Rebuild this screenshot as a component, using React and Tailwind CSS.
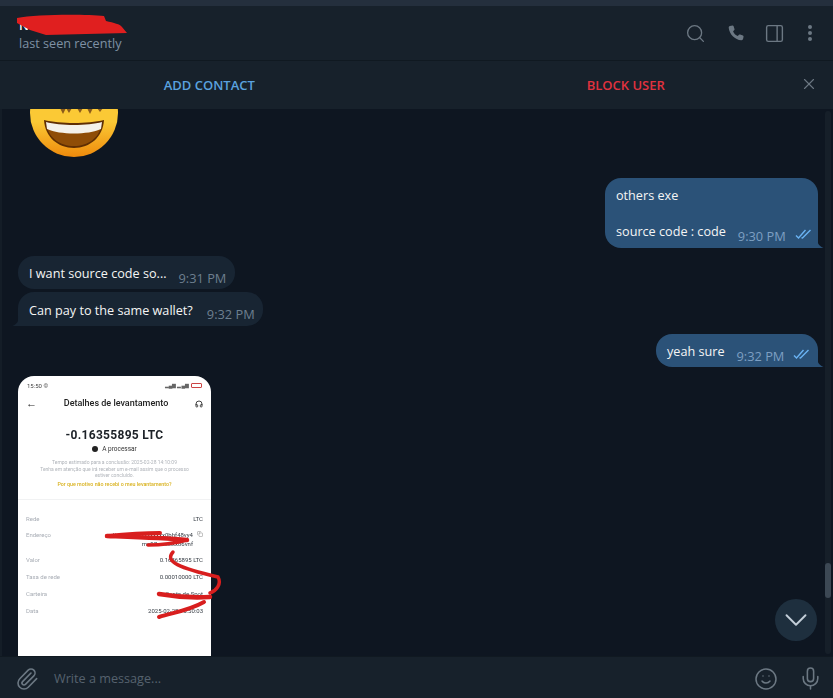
import React from "react";
import { Search, PanelRight, X, ChevronDown, Paperclip, Smile, Mic, Headphones, Copy } from "lucide-react";

function Checks() {
  return (
    <svg width="18" height="10" viewBox="0 0 18 10" fill="none" stroke="#6ab3f3" strokeWidth="1.4" className="ml-[9px] mt-[7px] shrink-0">
      <path d="M1 6.5 L3.5 9 L10.5 1" />
      <path d="M6.5 8.8 L7.5 9 L15.5 1" />
    </svg>
  );
}

function OutTail() {
  return (
    <svg width="7" height="10" viewBox="0 0 7 10" className="absolute -right-[6px] bottom-0" fill="#2b5278">
      <path d="M0 0 C0 5 2 8 6.5 10 L0 10 Z" />
    </svg>
  );
}

function InTail() {
  return (
    <svg width="7" height="10" viewBox="0 0 7 10" className="absolute -left-[6px] bottom-0" fill="#182533">
      <path d="M7 0 C7 5 5 8 0.5 10 L7 10 Z" />
    </svg>
  );
}

function Emoji() {
  return (
    <svg width="88" height="88" viewBox="0 0 88 88" className="-mt-[40px] ml-[28px] shrink-0">
      <defs>
        <linearGradient id="face" x1="0" y1="0" x2="0" y2="1">
          <stop offset="0.6" stopColor="#fbc935" />
          <stop offset="1" stopColor="#ee8a0c" />
        </linearGradient>
      </defs>
      <circle cx="44" cy="44" r="44" fill="url(#face)" />
      <path d="M30 39 L33 45 L36 39 Z M36 39 L39 44 L42 39 Z M47 39 L50 44 L53 39 Z M57 39 L60 45 L63 39 Z M67 39 L70 43 L73 39 Z" fill="#8a5a1a" />
      <path d="M14 51 C30 55 58 55 74 51 C73 68 60 79 44 79 C28 79 15 68 14 51 Z" fill="#5f2e03" />
      <path d="M17 57 C30 63 58 63 71 57 C69 69 58 77 44 77 C30 77 19 69 17 57 Z" fill="#8f4d07" />
      <path d="M16 53 C30 57 58 57 72 53 L71 60 C58 66 30 66 17 60 Z" fill="#f4f1ea" />
    </svg>
  );
}

function Row({ label, value }) {
  return (
    <div className="flex justify-between items-center h-[17px] text-[6px]">
      <span className="text-[#a8adb5]">{label}</span>
      <span className="text-[#3a4048]">{value}</span>
    </div>
  );
}

function PhoneShot() {
  return (
    <div className="relative w-[193px] h-[280px] ml-[16px] mt-[9px] shrink-0 bg-white rounded-t-[16px] leading-[1.5] font-['Roboto',sans-serif]">
      <div className="blur-[0.35px]">
        <div className="flex justify-between items-center px-[9px] pt-[5px] text-[6px] text-[#444]">
          <span>15:50 ©</span>
          <span className="flex items-center gap-[2px] text-[5px] text-[#666]">
            ▂▄▆ ▂▄▆
            <span className="w-[11px] h-[5px] border border-[#c44] rounded-[1px]" />
          </span>
        </div>
        <div className="flex justify-between items-center px-[8px] mt-[7px] text-[#222]">
          <span className="text-[11px] leading-none font-bold">←</span>
          <span className="text-[9px] font-medium">Detalhes de levantamento</span>
          <Headphones size={8} strokeWidth={2.5} />
        </div>
        <div className="mt-[16px] text-center text-[12px] font-bold tracking-[0.3px] text-[#1c2127] leading-[16px]">-0.16355895 LTC</div>
        <div className="flex justify-center items-center gap-[4px] mt-[2px] text-[6.5px] text-[#333]">
          <span className="w-[6px] h-[6px] rounded-full bg-[#222]" />
          A processar
        </div>
        <div className="mt-[5px] text-center text-[5px] leading-[6.5px] text-[#b0b4ba] px-[8px]">
          Tempo estimado para a conclusão: 2025-02-28 14:10:09
          <br />
          Tenha em atenção que irá receber um e-mail assim que o processo
          <br />
          estiver concluído.
        </div>
        <div className="mt-[1px] text-center text-[5.3px] leading-[8px] font-medium text-[#d9b21f]">Por que motivo não recebi o meu levantamento?</div>
        <div className="mt-[11px] border-t border-[#f1f2f3] pt-[10px] px-[8px]">
          <Row label="Rede" value="LTC" />
          <div className="relative flex justify-between h-[24px] text-[6px] pt-[3px]">
            <span className="text-[#a8adb5]">Endereço</span>
            <span className="text-right text-[#3a4048] leading-[9px] pr-[10px]">
              ltc1qxxxxxxxxxxxxx0bhf48vy4
              <br />
              ma97xxxxxxx86vnf
            </span>
            <Copy size={6} className="absolute right-0 top-[4px] text-[#888]" />
          </div>
          <Row label="Valor" value="0.16365895 LTC" />
          <Row label="Taxa de rede" value="0.00010000 LTC" />
          <Row label="Carteira" value="Conta de Spot" />
          <Row label="Data" value="2025-02-28 15:50:03" />
        </div>
      </div>
      <svg width="210" height="130" viewBox="0 0 210 130" fill="none" stroke="#d81e1e" strokeLinecap="round" className="absolute left-0 top-[140px] pointer-events-none">
        <path d="M89 20 C110 18 130 17 142 17" strokeWidth="4" />
        <path d="M89 20 C115 21 145 22 169 24" strokeWidth="4.5" />
        <path d="M130 29 C145 29 158 27 169 24" strokeWidth="3.5" />
        <path d="M155 36 C146 46 162 52 200 61 C204 68 198 75 192 77" strokeWidth="3.5" />
        <path d="M141 78 C158 81 175 82 192 81" strokeWidth="4.5" />
        <path d="M186 86 C172 94 158 96 141 101" strokeWidth="4" />
      </svg>
    </div>
  );
}

export default function App() {
  return (
    <div className="w-[833px] h-[698px] flex flex-col overflow-hidden bg-[#0e1621] font-['Open_Sans',sans-serif]">
      <div className="h-[6px] shrink-0 bg-[#242f3d]" />

      <header className="relative h-[55px] shrink-0 bg-[#17212b] border-b border-[#101921] flex items-center justify-between pl-[19px] pr-[20px]">
        <div className="pt-[2px]">
          <div className="text-[12.65px] leading-[18px] font-semibold text-white">N</div>
          <div className="text-[12.65px] leading-[18px] text-[#7f91a4]">last seen recently</div>
        </div>
        <svg width="112" height="24" viewBox="0 0 112 24" className="absolute left-[16px] top-[7px]" fill="#e01f1f">
          <path d="M1 5 C20 1 70 1 88 3 L90 8 C98 10 104 11 106 14 L111 20 L30 22 L14 17 L1 10 Z" />
        </svg>
        <div className="flex items-center text-[#6c7883]">
          <Search size={21} strokeWidth={1.5} className="mr-[22px]" />
          <svg width="16" height="16" viewBox="0 0 18 18" fill="currentColor" className="mr-[20px]">
            <path d="M2.2 1.2 L5 0.5 C5.6 0.4 6 0.7 6.2 1.2 L7.3 4.4 C7.5 5 7.3 5.4 6.9 5.8 L5.7 7 C6.5 9.4 8.6 11.5 11 12.3 L12.3 11.1 C12.7 10.7 13.2 10.5 13.7 10.7 L16.8 11.9 C17.3 12.1 17.6 12.5 17.5 13.1 L17 15.6 C16.8 16.6 16.1 17.3 15 17.2 C7.8 16.6 1.4 10.2 0.8 3 C0.8 2.1 1.3 1.4 2.2 1.2 Z" />
          </svg>
          <PanelRight size={21} strokeWidth={1.6} className="mr-[22px]" />
          <div className="flex flex-col gap-[2px] px-[1px]">
            <span className="w-[4px] h-[4px] rounded-full bg-[#6c7883]" />
            <span className="w-[4px] h-[4px] rounded-full bg-[#6c7883]" />
            <span className="w-[4px] h-[4px] rounded-full bg-[#6c7883]" />
          </div>
        </div>
      </header>

      <div className="relative h-[48px] shrink-0 bg-[#17212b] flex items-center pt-[1px] text-[13px] font-semibold">
        <div className="w-[419px] text-center text-[#5aa2df]">ADD CONTACT</div>
        <div className="w-[415px] text-center text-[#e0323f]">BLOCK USER</div>
        <X size={18} strokeWidth={1.5} className="absolute left-[800px] top-[14px] text-[#6c7883]" />
      </div>

      <main className="relative flex-1 min-h-0 overflow-hidden flex flex-col border-l-[2px] border-[#141d27] text-[12.65px] leading-[18px] text-[#f5f5f5]">
        <Emoji />

        <div className="relative self-end mt-[21px] mr-[15px] w-[213px] h-[70px] bg-[#2b5278] rounded-t-[16px] rounded-bl-[16px] pl-[11px] pt-[8px] whitespace-nowrap">
          <div>others exe</div>
          <div className="mt-[18px] flex items-start">
            <span>source code : code</span>
            <span className="ml-[12px] mt-[6px] text-[12.8px] leading-[16px] text-[#7d9fc2]">9:30 PM</span>
            <Checks />
          </div>
          <OutTail />
        </div>

        <div className="self-start mt-[8px] ml-[16px] h-[33px] w-[217px] bg-[#182533] rounded-[16px] pl-[11px] pt-[8px] whitespace-nowrap flex items-start">
          <span>I want source code so...</span>
          <span className="ml-[12px] mt-[6px] text-[12.8px] leading-[16px] text-[#6d7f8f]">9:31 PM</span>
        </div>

        <div className="relative self-start mt-[3px] ml-[16px] h-[34px] w-[245px] bg-[#182533] rounded-[16px] rounded-bl-none pl-[11px] pt-[9px] whitespace-nowrap flex items-start">
          <span>Can pay to the same wallet?</span>
          <span className="ml-[14px] mt-[5px] text-[12.8px] leading-[16px] text-[#6d7f8f]">9:32 PM</span>
          <InTail />
        </div>

        <div className="relative self-end mt-[8px] mr-[15px] h-[33px] w-[162px] bg-[#2b5278] rounded-t-[16px] rounded-bl-[16px] pl-[11px] pt-[8px] whitespace-nowrap flex items-start">
          <span>yeah sure</span>
          <span className="ml-[12px] mt-[6px] text-[12.8px] leading-[16px] text-[#7d9fc2]">9:32 PM</span>
          <Checks />
          <OutTail />
        </div>

        <PhoneShot />

        {/* active item marker on the left edge */}
        <div className="absolute -left-[2px] top-[199px] w-[2px] h-[62px] bg-[#2f5f8f]" />

        {/* scrollbar */}
        <div className="absolute right-[2px] top-[2px] bottom-[2px] w-[6px] rounded-full bg-[#161f29]">
          <div className="absolute top-[452px] h-[35px] w-full rounded-full bg-[#3c4854]" />
        </div>

        <button className="absolute left-[773px] top-[490px] w-[42px] h-[42px] rounded-full bg-[#1e2f3e] flex items-center justify-center text-[#c3ced8]">
          <ChevronDown size={38} strokeWidth={1.2} />
        </button>
      </main>

      <footer className="h-[42px] shrink-0 bg-[#17212b] border-t border-[#101921] flex items-center pt-[2px] pl-[15px] pr-[10px] text-[#6c7883]">
        <Paperclip size={24} strokeWidth={1.6} />
        <span className="ml-[15px] text-[12.65px] text-[#56626e]">Write a message...</span>
        <Smile size={24} strokeWidth={1.5} className="ml-auto mr-[20px]" />
        <Mic size={25} strokeWidth={1.5} />
      </footer>
    </div>
  );
}
